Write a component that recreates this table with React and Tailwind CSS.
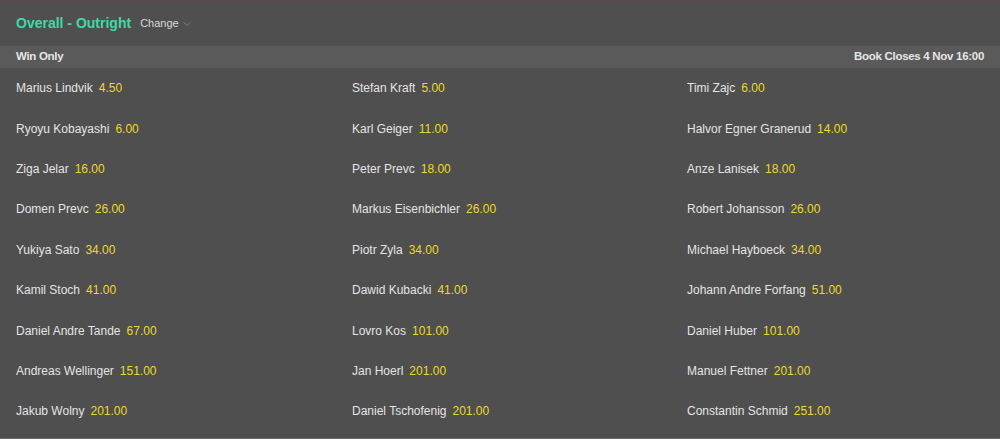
import { ChevronDown } from "lucide-react";

const runners = [
    ["Marius Lindvik", "4.50"], ["Stefan Kraft", "5.00"], ["Timi Zajc", "6.00"],
    ["Ryoyu Kobayashi", "6.00"], ["Karl Geiger", "11.00"], ["Halvor Egner Granerud", "14.00"],
    ["Ziga Jelar", "16.00"], ["Peter Prevc", "18.00"], ["Anze Lanisek", "18.00"],
    ["Domen Prevc", "26.00"], ["Markus Eisenbichler", "26.00"], ["Robert Johansson", "26.00"],
    ["Yukiya Sato", "34.00"], ["Piotr Zyla", "34.00"], ["Michael Hayboeck", "34.00"],
    ["Kamil Stoch", "41.00"], ["Dawid Kubacki", "41.00"], ["Johann Andre Forfang", "51.00"],
    ["Daniel Andre Tande", "67.00"], ["Lovro Kos", "101.00"], ["Daniel Huber", "101.00"],
    ["Andreas Wellinger", "151.00"], ["Jan Hoerl", "201.00"], ["Manuel Fettner", "201.00"],
    ["Jakub Wolny", "201.00"], ["Daniel Tschofenig", "201.00"], ["Constantin Schmid", "251.00"],
];

export default function App() {
    return (
        <div className="w-[1000px] h-[439px] bg-[#4f4f4f] border-t border-[#5c4848] overflow-hidden font-['Liberation_Sans',Arial,sans-serif]">
            {/* market title */}
            <div className="h-[45px] flex items-center pl-4 gap-[9px]">
                <span className="text-[14px] font-bold text-[#3ed9a7]">Overall - Outright</span>
                <span className="flex items-center gap-[2px] text-[11px] text-[#d8d8d8]">
                    Change
                    <ChevronDown size={12} strokeWidth={1.25} className="text-[#a0a0a0]" />
                </span>
            </div>

            {/* sub header */}
            <div className="h-[22px] bg-[#5a5a5a] flex items-center justify-between px-4 text-[11.5px] font-bold tracking-[-0.3px] text-[#e6e6e6]">
                <span>Win Only</span>
                <span>Book Closes 4 Nov 16:00</span>
            </div>

            <div className="grid grid-cols-[336px_335px_1fr] pl-4 pb-[6px] border-b border-[#6a6a6a]">
                {runners.map((r, i) => (
                    <div key={i} className="h-[40.4px] flex items-center gap-[6px] text-[12px]">
                        <span className="text-[#e4e4e4]">{r[0]}</span>
                        <span className="text-[#ecd92b]">{r[1]}</span>
                    </div>
                ))}
            </div>
        </div>
    );
}
